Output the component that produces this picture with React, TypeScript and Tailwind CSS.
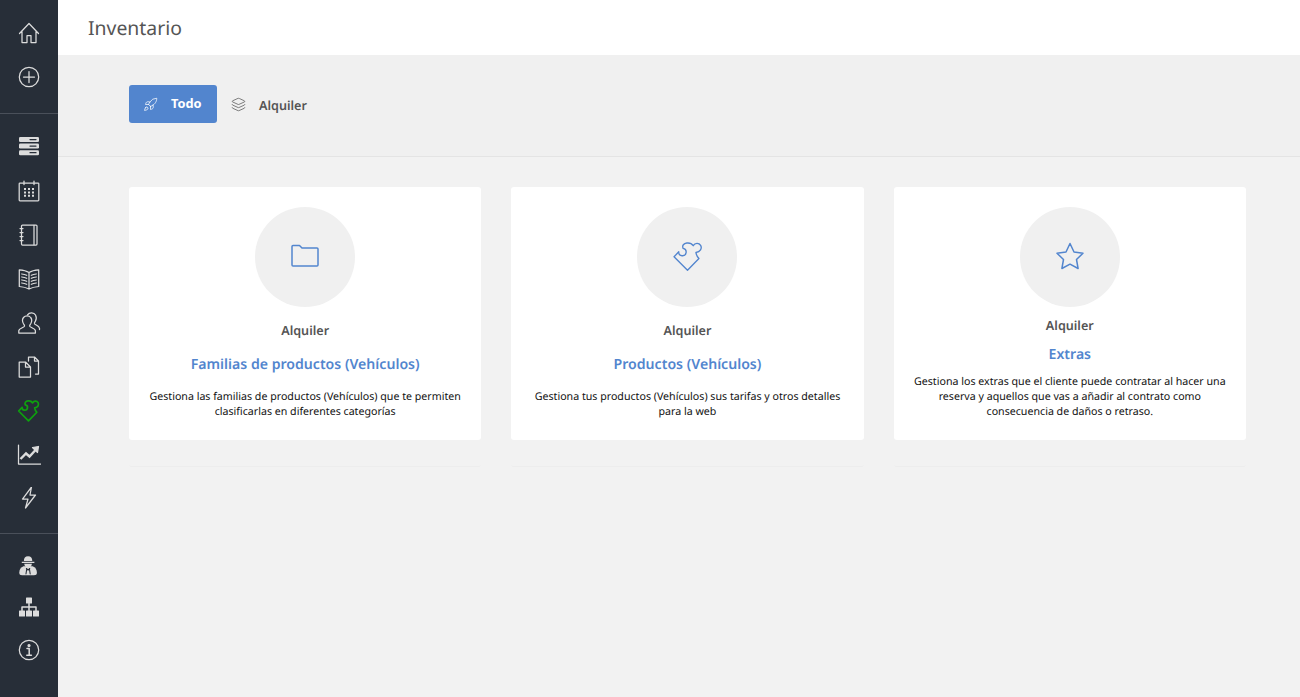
import type { ReactNode } from "react";
import { Layers, Rocket } from "lucide-react";

const PUZZLE =
  "M132 168 L146 153 A11 11 0 1 0 159 143 C155 134 161 128 170 127 C178 126 185 129 189 135 C194 126 206 126 211 134 C216 143 210 154 197 155 C198 162 201 168 206 173 L172 208 Z";

function Svg({ children, size = 24, box = "0 0 24 24", className = "" }: { children: ReactNode; size?: number; box?: string; className?: string }) {
  return (
    <svg width={size} height={size} viewBox={box} fill="none" stroke="currentColor" strokeWidth="1.25" strokeLinejoin="round" strokeLinecap="round" className={className}>
      {children}
    </svg>
  );
}

const PuzzleIcon = ({ size, width }: { size: number; width: number }) => (
  <Svg size={size} box="117 115 110 110">
    <path d={PUZZLE} strokeWidth={width} />
  </Svg>
);

const topIcons = [
  <Svg key="home">
    <path d="M2.500 12.500 12 2.500l9.500 10M5 10.500V21.500h5v-7h4v7h5V10.500" />
  </Svg>,
  <Svg key="plus">
    <circle cx="12" cy="12" r="9.700" />
    <path d="M12 6.500v11M6.500 12h11" />
  </Svg>,
];

const midIcons = [
  <Svg key="server">
    <g fill="currentColor" stroke="none">
      <rect x="2" y="2" width="20" height="5" rx="1.300" />
      <rect x="2" y="8.600" width="20" height="5" rx="1.300" />
      <rect x="2" y="15.200" width="20" height="5" rx="1.300" />
    </g>
    <path d="M13 4.500h6M13 11.100h6M13 17.700h6" stroke="#272e38" />
  </Svg>,
  <Svg key="calendar">
    <rect x="2.200" y="4" width="19.600" height="17.800" rx="0.800" />
    <path d="M7 2v3.500M17 2v3.500" />
    <path d="M7 10h2M11 10h2M15 10h2M7 13.400h2M11 13.400h2M15 13.400h2M7 16.800h2M11 16.800h2M15 16.800h2" strokeWidth="2" strokeLinecap="butt" />
  </Svg>,
  <Svg key="notebook">
    <rect x="4.500" y="2" width="15.500" height="20" rx="1" />
    <path d="M17 2.300v19.400M3 5.500h3M3 9.500h3M3 13.500h3M3 17.500h3" />
  </Svg>,
  <Svg key="book">
    <path d="M12 5.500C9 3.500 5.500 3 2.300 2.800v16.700c3.500.3 6.800 1 9.700 2.500 2.900-1.500 6.200-2.200 9.700-2.500V2.800C18.500 3 15 3.500 12 5.500ZM12 5.500V22" />
    <path d="M4.800 7c1.800.2 3.400.6 4.900 1.300M4.800 10c1.800.2 3.400.6 4.900 1.300M4.800 13c1.800.2 3.400.6 4.900 1.300M4.800 16c1.800.2 3.400.6 4.900 1.300M19.200 7c-1.800.2-3.400.6-4.900 1.300M19.200 10c-1.800.2-3.400.6-4.900 1.300M19.200 13c-1.800.2-3.400.6-4.900 1.300M19.200 16c-1.800.2-3.400.6-4.900 1.300" />
  </Svg>,
  <Svg key="users">
    <path d="M1.800 22v-2.200c0-2.300 5-3.200 5.700-4.500.3-.8-.4-1.500-1-2.500C5.500 11 5.300 8 6.500 6.500c1.800-2.300 5.500-2.300 7.200 0 1.200 1.500 1 4.500 0 6.300-.6 1-1.300 1.700-1 2.500.7 1.300 5.700 2.200 5.700 4.500V22Z" />
    <path d="M10.500 3.800C12.500 1 17 1.300 18.500 4c1 1.800.8 4.500-.1 6.200-.5 1-1.200 1.700-.9 2.500.6 1.200 4.700 2 5 4.500v1.300" />
  </Svg>,
  <Svg key="docs">
    <path d="M2.200 7h6.300l5 5v10H2.200ZM8.500 7v5h5" />
    <path d="M8 6V2h6l4 4v13h-3M14 2v4h4" transform="translate(3.500 0)" />
  </Svg>,
  <span key="puzzle" className="text-[#0ea10e]">
    <PuzzleIcon size={27} width={7} />
  </span>,
  <Svg key="chart">
    <g transform="translate(0 -1)">
      <path d="M1.500 3v19h22" />
      <path d="M3.500 17l5.500-5.500 3.500 3 6.500-7" strokeWidth="2.400" strokeLinejoin="miter" strokeLinecap="butt" />
      <path d="M15.500 5.500 21.500 4.500 20.500 10.500Z" fill="currentColor" />
    </g>
  </Svg>,
  <Svg key="bolt">
    <path d="M14.500 0 5.500 12h5.500L8.500 21 18.500 8H13Z" />
  </Svg>,
];

const bottomIcons = [
  <Svg key="spy" size={21} box="0 0 25 24">
    <path d="M5 23.500c-2.500 0-3.500-1-3.500-3 0-3.500 2-6.500 5-7.500h11c3 1 5 4 5 7.500 0 2-1 3-3.500 3Z" fill="currentColor" stroke="none" />
    <path d="M7 6.500C7 3 8.500 1 12 1s5 2 5 5.500ZM4.500 7.500h15V9h-15Z" fill="currentColor" stroke="none" />
    <path d="M7.500 10h9c0 2.800-1.800 4.500-4.500 4.500S7.500 12.800 7.500 10Z" fill="currentColor" stroke="none" />
    <path d="M10.500 15.500 9.500 22M13.500 15.500 14.500 22M10 15.500l2 2 2-2" stroke="#272e38" />
  </Svg>,
  <Svg key="tree">
    <g transform="translate(0 .5)">
      <g fill="currentColor" stroke="none">
        <rect x="9" y="2" width="6" height="6" rx=".6" />
        <rect x="2" y="15" width="6" height="6" rx=".6" />
        <rect x="9" y="15" width="6" height="6" rx=".6" />
        <rect x="16" y="15" width="6" height="6" rx=".6" />
      </g>
      <path d="M12 8v7M5 15v-3.500h14V15" strokeWidth="1.500" />
    </g>
  </Svg>,
  <Svg key="info">
    <circle cx="12" cy="13" r="9.700" />
    <circle cx="12" cy="8.500" r="1" fill="currentColor" />
    <path d="M10 11.500h2.200v6.500M9.800 18.200h4.600" strokeWidth="1.500" />
  </Svg>,
];

const cards = [
  {
    title: "Familias de productos (Vehículos)",
    text: "Gestiona las familias de productos (Vehículos) que te permiten clasificarlas en diferentes categorías",
    labelClass: "mt-[15px]",
    titleClass: "mt-[15px]",
    textClass: "mt-[15px]",
    icon: (
      <Svg size={30} box="0 1 30 30">
        <path d="M2 5.500C2 5 2.400 4.500 3 4.500h6.500l2.500 2.500h15c.6 0 1 .4 1 1V24c0 .6-.4 1-1 1H3c-.6 0-1-.4-1-1Z" strokeWidth="1.500" />
      </Svg>
    ),
  },
  {
    title: "Productos (Vehículos)",
    text: "Gestiona tus productos (Vehículos) sus tarifas y otros detalles para la web",
    labelClass: "mt-[15px]",
    titleClass: "mt-[15px]",
    textClass: "mt-[15px]",
    icon: <PuzzleIcon size={37} width={4} />,
  },
  {
    title: "Extras",
    text: "Gestiona los extras que el cliente puede contratar al hacer una reserva y aquellos que vas a añadir al contrato como consecuencia de daños o retraso.",
    labelClass: "mt-[10px]",
    titleClass: "mt-[10px]",
    textClass: "mt-[10px]",
    icon: (
      <Svg size={30} box="0 1 30 30">
        <path d="M15 2.500 19 11l9 1.200-6.500 6.300 1.600 9L15 23.200l-8.100 4.300 1.600-9L2 12.200 11 11Z" strokeWidth="1.500" />
      </Svg>
    ),
  },
];

function SideIcon({ children }: { children: ReactNode }) {
  return <div className="flex h-[24px] w-full items-center justify-center pr-[1px]">{children}</div>;
}

export default function App() {
  return (
    <div className="flex min-h-[697px] bg-[#f2f2f2] font-['Noto_Sans',sans-serif] [text-rendering:geometricPrecision]">
      <aside className="flex w-[58px] shrink-0 flex-col bg-[#272e38] text-[#dcdcdc]">
        <div className="flex h-[114px] flex-col gap-[20px] border-b border-[#4a505a] pt-[21px]">
          {topIcons.map((icon, i) => (
            <SideIcon key={i}>{icon}</SideIcon>
          ))}
        </div>
        <div className="flex h-[420px] flex-col gap-[20px] border-b border-[#4a505a] pt-[21px]">
          {midIcons.map((icon, i) => (
            <SideIcon key={i}>{icon}</SideIcon>
          ))}
        </div>
        <div className="flex flex-col gap-[18px] pt-[19px]">
          {bottomIcons.map((icon, i) => (
            <SideIcon key={i}>{icon}</SideIcon>
          ))}
        </div>
      </aside>
      <main className="min-w-0 flex-1">
        <header className="flex h-[55px] items-center bg-white pl-[30px]">
          <h1 className="text-[19.4px] text-[#555555]">Inventario</h1>
        </header>
        <div className="flex h-[102px] items-start gap-[14px] border-b border-[#e4e4e4] bg-[#f0f0f0] pl-[71px] pt-[30px]">
          <button className="flex h-[38px] w-[88px] items-center gap-[13px] rounded-[3px] bg-[#5285ce] pl-[14px] text-[12.8px] font-bold text-white">
            <Rocket size={15} strokeWidth={1.2} />
            Todo
          </button>
          <div className="flex h-[38px] items-center gap-[13px] text-[12.6px] font-semibold text-[#555555]">
            <Layers size={15} strokeWidth={1.2} />
            <span className="mt-[4px]">Alquiler</span>
          </div>
        </div>
        <div className="grid grid-cols-3 gap-[30px] pl-[71px] pr-[54px] pt-[30px]">
          {cards.map((card) => (
            <div key={card.title} className="rounded-[3px] border-b border-[#ededed] pb-[26px]">
              <div className="flex h-[253px] flex-col items-center rounded-[3px] bg-white px-[20px] pt-[20px] text-center">
                <div className="flex h-[100px] w-[100px] shrink-0 items-center justify-center rounded-full bg-[#f0f0f0] text-[#5285ce]">
                  {card.icon}
                </div>
                <div className={`text-[12.6px] leading-[18px] font-semibold text-[#555555] ${card.labelClass}`}>Alquiler</div>
                <div className={`text-[14.1px] leading-[20px] font-semibold text-[#5285ce] ${card.titleClass}`}>{card.title}</div>
                <p className={`text-[10.65px] leading-[15px] text-[#111111] ${card.textClass}`}>{card.text}</p>
              </div>
            </div>
          ))}
        </div>
      </main>
    </div>
  );
}
